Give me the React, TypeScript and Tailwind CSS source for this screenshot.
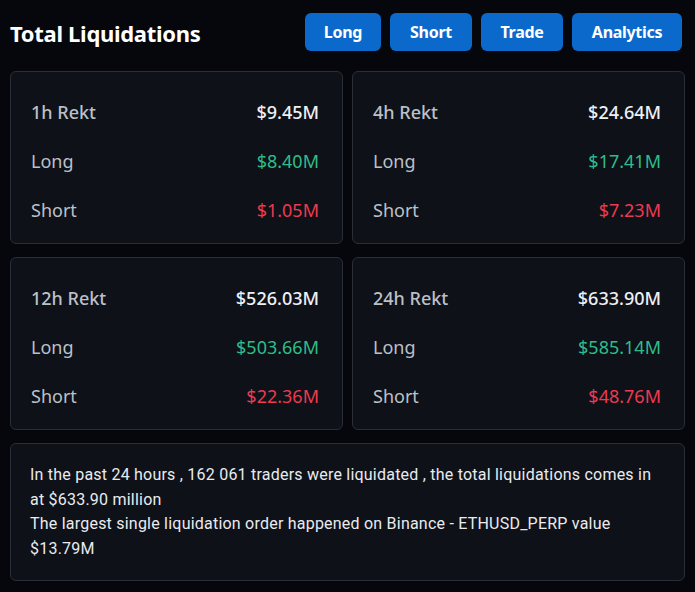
const cards = [
  { period: "1h", total: "$9.45M", long: "$8.40M", short: "$1.05M" },
  { period: "4h", total: "$24.64M", long: "$17.41M", short: "$7.23M" },
  { period: "12h", total: "$526.03M", long: "$503.66M", short: "$22.36M" },
  { period: "24h", total: "$633.90M", long: "$585.14M", short: "$48.76M" },
];

const buttons = [
  { label: "Long", w: "w-[76px]" },
  { label: "Short", w: "w-[82px]" },
  { label: "Trade", w: "w-[82px]" },
  { label: "Analytics", w: "w-[110px]" },
];

function RektCard({ period, total, long, short }: (typeof cards)[number]) {
  return (
    <div className="h-[173px] rounded-md border border-[#2a2e37] bg-[#0e1118] pl-[20px] pr-[23px] pt-[26px] text-[18px]">
      <div className="flex h-[28px] items-center justify-between">
        <span className="font-medium text-[#bcc0c8]">{period} Rekt</span>
        <span className="font-medium text-[#eef0f4]">{total}</span>
      </div>
      <div className="mt-[21px] flex h-[28px] items-center justify-between">
        <span className="text-[#bcc0c8]">Long</span>
        <span className="text-[#2ebd8a]">{long}</span>
      </div>
      <div className="mt-[21px] flex h-[28px] items-center justify-between">
        <span className="text-[#bcc0c8]">Short</span>
        <span className="text-[#ec3a50]">{short}</span>
      </div>
    </div>
  );
}

export default function App() {
  return (
    <main className="min-h-screen w-[695px] bg-[#05070d] px-[10px] pt-[13px] pb-3 font-['Noto_Sans',sans-serif]">
      <div className="flex items-center justify-between">
        <h1 className="pt-[2px] text-[22px] font-bold tracking-[-0.3px] text-white">Total Liquidations</h1>
        <div className="flex gap-[9px] pr-[3px]">
          {buttons.map((b) => (
            <button
              key={b.label}
              className={`h-[38px] ${b.w} rounded-md bg-[#0c69cc] text-[16px] font-bold tracking-[-0.3px] text-white`}
            >
              {b.label}
            </button>
          ))}
        </div>
      </div>

      <div className="mt-[20px] grid grid-cols-2 gap-x-[9px] gap-y-[13px]">
        {cards.map((c) => (
          <RektCard key={c.period} {...c} />
        ))}
      </div>

      <div className="mt-[13px] h-[138px] rounded-md border border-[#2a2e37] bg-[#0e1118] px-[19px] pt-[19px] font-['Roboto',sans-serif] text-[16px] leading-[24.5px] tracking-[0.22px] text-[#e9ebef]">
        <p>
          In the past 24 hours , 162 061 traders were liquidated , the total liquidations comes in at $633.90 million
        </p>
        <p>The largest single liquidation order happened on Binance - ETHUSD_PERP value $13.79M</p>
      </div>
    </main>
  );
}
